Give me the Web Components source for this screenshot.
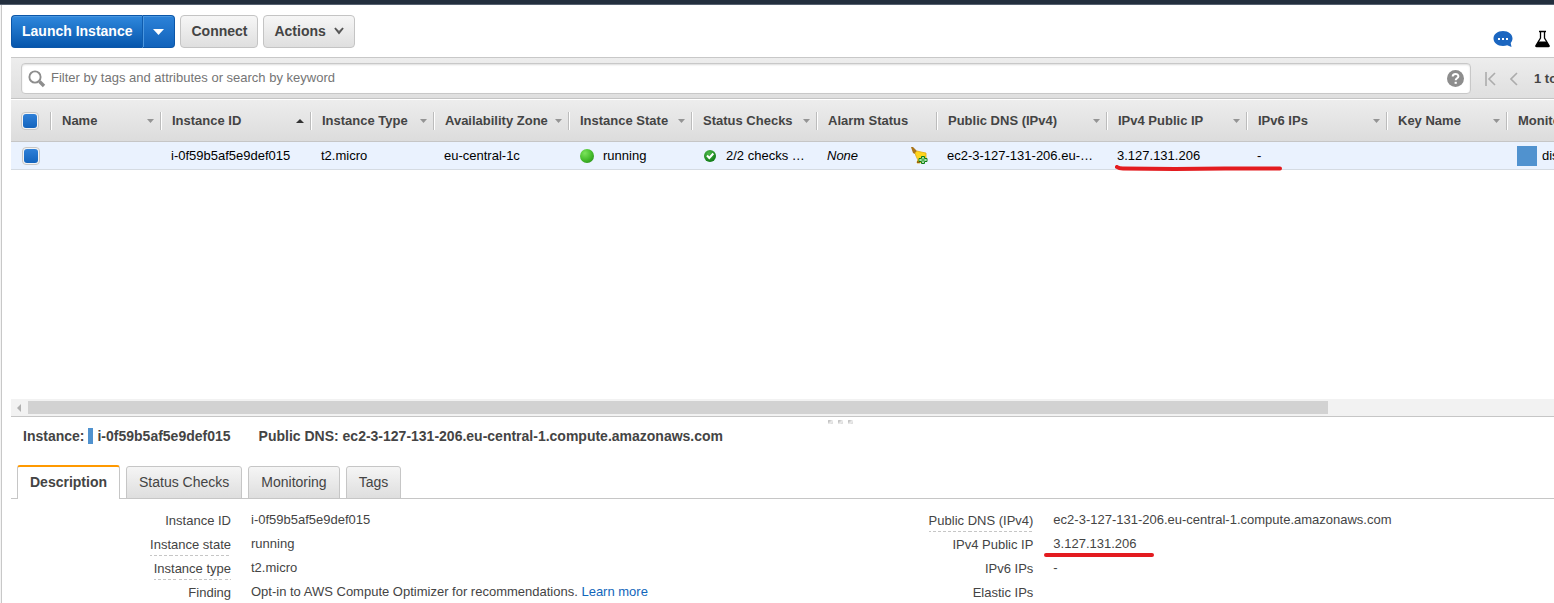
<!DOCTYPE html>
<html lang="en">
<head>
<meta charset="utf-8">
<title>EC2 Instances</title>
<style>
html, body { margin: 0; height: 100%; overflow: hidden; background: #f4f4f4; }
body { font: 13px/18px "Liberation Sans", Arial, sans-serif; color: #444; }
</style>
</head>
<body>
<ec2-console></ec2-console>
<script>
const define = (name, html, setup) => {
  const tpl = document.createElement('template');
  tpl.innerHTML = `<style>*{box-sizing:border-box}</style>` + html;
  customElements.define(name, class extends HTMLElement {
    constructor() {
      super();
      this.attachShadow({ mode: 'open' }).append(tpl.content.cloneNode(true));
    }
    connectedCallback() { if (setup) setup(this, this.shadowRoot); }
  });
};

define('ui-button', `
<style>
:host { display: block; }
button { display: flex; align-items: center; gap: 8px; height: 33px; margin: 0; padding: 0 10px 2px; border: 1px solid #c4c4c4; border-radius: 4px;
  background: linear-gradient(#f6f6f6, #dfdfdf); color: #444; font: bold 14px/20px "Liberation Sans", Arial, sans-serif; }
:host([kind=primary]) button { color: #fff; border-color: #0b56a8; background: linear-gradient(#2f88dd, #0656ac); box-shadow: inset 0 1px #4b97df; }
:host([side=left]) button { border-radius: 4px 0 0 4px; border-right: 0; }
:host([side=right]) button { border-radius: 0 4px 4px 0; border-left-color: #0f5cae; box-shadow: inset 1px 1px #4b97df; background: linear-gradient(#2c82d8, #1263bb); padding-bottom: 0; }
</style>
<button type="button"><slot></slot></button>`, (el, root) => {
  const name = el.getAttribute('label');
  if (name) root.querySelector('button').setAttribute('aria-label', name);
});

define('console-toolbar', `
<style>
:host { display: flex; align-items: flex-start; height: 52px; padding: 10px 4px 0 0; }
.group { display: flex; margin-right: 5px; }
svg { display: block; }
.tools { display: flex; gap: 22px; margin: 15px 0 0 auto; }
.tools button { padding: 0; border: 0; background: none; }
</style>
<div class="group">
  <ui-button kind="primary" side="left">Launch Instance</ui-button>
  <ui-button kind="primary" side="right" label="More launch options"><svg width="11" height="6"><path d="M0 0h11L5.500 6z" fill="#fff"/></svg></ui-button>
</div>
<div class="group"><ui-button>Connect</ui-button></div>
<div class="group"><ui-button>Actions <svg width="10" height="8" viewBox="0 0 10 8"><path d="M1 1l4 5 4-5" fill="none" stroke="#555" stroke-width="2"/><path d="M2 1l3 3 3-3" fill="none" stroke="#999"/></svg></ui-button></div>
<div class="tools">
  <button type="button" aria-label="Feedback"><svg width="20" height="18" viewBox="0 0 20 18"><path d="M10 1C4.500 1 .500 4.300.500 8.500S4.500 16 10 16c1.500 0 3-.3 4.200-.8L18.500 17l-.8-4c1-1.300 1.800-2.800 1.800-4.500C19.500 4.300 15.500 1 10 1z" fill="#1b66c0"/><path d="M5 8h2v2H5zM9 8h2v2H9zM13 8h2v2h-2z" fill="#fff"/></svg></button>
  <button type="button" aria-label="Experiments"><svg width="15" height="18" viewBox="0 0 15 18"><path d="M4 1.500h7M5.500 2v6L1 15.500q-.3 1 .5 1h12q.8 0 .5-1L9.500 8V2" fill="none" stroke="#000" stroke-width="1.300"/><path d="M3.500 11.500h8L14.500 16q0 1-1 1h-12q-1 0-1-1z"/></svg></button>
</div>`);

define('filter-bar', `
<style>
:host { display: flex; height: 42px; padding: 5px 0 0 10px; border-top: 1px solid #c8c8c8; border-bottom: 1px solid #c4c4c4;
  background: linear-gradient(#ededed, #dfdfdf); overflow: hidden; }
.box { flex: 1; min-width: 0; display: flex; align-items: center; height: 31px; padding: 0 6px; border: 1px solid #c8c8c8; border-radius: 4px; background: #fff; box-shadow: inset 0 1px 2px #ddd; }
input { flex: 1; min-width: 0; margin: 0; padding: 0 5px 2px; border: 0; outline: 0; background: none; color: #444; font: 13px/20px "Liberation Sans", Arial, sans-serif; }
input::placeholder { color: #757575; opacity: 1; }
svg { display: block; }
button { padding: 0; border: 0; background: none; }
.pager { flex: 0 0 83px; min-width: 0; height: 31px; display: flex; align-items: center; padding-left: 14px; white-space: nowrap; font-weight: bold; }
.pager button { flex: none; }
.prev { margin: 0 16px 0 14px; }
</style>
<div class="box">
  <svg width="18" height="18" viewBox="0 0 18 18"><circle cx="7" cy="7" r="5.600" fill="none" stroke="#8d8d8d" stroke-width="1.900"/><path d="M11.500 11.500l4.500 4.500" stroke="#8d8d8d" stroke-width="3.400"/></svg>
  <input type="text" aria-label="Filter instances" placeholder="Filter by tags and attributes or search by keyword">
  <button type="button" aria-label="Help"><svg width="17" height="17" viewBox="0 0 17 17"><circle cx="8.500" cy="8.500" r="8.500" fill="#8d8d8d"/><path d="M5.700 6.600c0-3.600 5.700-3.500 5.700-.3 0 2-2.700 2-2.700 4" fill="none" stroke="#fff" stroke-width="2"/><path d="M7.600 11.800h2.200v2H7.600z" fill="#fff"/></svg></button>
</div>
<div class="pager">
  <button type="button" aria-label="First page"><svg width="11" height="14" viewBox="0 0 11 14" fill="none" stroke="#acacac" stroke-width="1.600"><path d="M1 0v14M10 1L4 7l6 6"/></svg></button>
  <button class="prev" type="button" aria-label="Previous page"><svg width="8" height="14" viewBox="0 0 8 14" fill="none" stroke="#acacac" stroke-width="1.600"><path d="M7 1L1 7l6 6"/></svg></button>
  <span>1 to 1 of 1</span>
</div>`);

define('tick-box', `
<style>
:host { display: block; }
input { appearance: none; display: block; width: 18px; height: 18px; margin: 0; border: 1px solid #c6c6c6; border-radius: 4px; background: #f4f4f4; padding: 1px; }
input:checked::before { content: ""; display: block; width: 14px; height: 14px; border-radius: 3px; background: linear-gradient(#2f80d8, #1464bd); }
</style>
<input type="checkbox" checked>`, (el, root) => {
  root.querySelector('input').setAttribute('aria-label', el.getAttribute('label'));
});

define('red-underline', `
<style>:host { position: absolute; z-index: 1; display: block; pointer-events: none; } svg { display: block; }</style>
<svg height="6"><path fill="none" stroke="#e31b1f" stroke-linecap="round" stroke-linejoin="round"/></svg>`, (el, root) => {
  const w = Number(el.getAttribute('length'));
  root.querySelector('svg').setAttribute('width', w);
  const p = root.querySelector('path');
  p.setAttribute('stroke-width', el.getAttribute('weight') || 4);
  p.setAttribute('d', el.hasAttribute('hooked') ? `M2 2Q4 3.500 8 3.500L60 4 110 3.500H${w - 2}` : `M2 3H${w - 2}`);
});

define('instance-table', `
<style>
:host { display: block; position: relative; overflow: hidden; padding-top: 1px; }
table { width: 1655px; table-layout: fixed; border-collapse: separate; border-spacing: 0; }
th { height: 42px; padding: 0; text-align: left; border-bottom: 1px solid #c6c6c6; background: linear-gradient(#ededed, #dcdcdc); white-space: nowrap; }
.head { display: flex; align-items: center; height: 18px; padding: 0 6px 0 10px; border-left: 1px solid #bcbcbc; box-shadow: inset 1px 0 #fff; line-height: 18px; }
.head span { padding-left: 1px; }
.head svg { margin-left: auto; }
.check { padding-left: 10px; }
td { height: 28px; padding: 0 13px 0 11px; border-bottom: 1px solid #d5dbe2; background: #eaf2fe; color: #000; white-space: nowrap; overflow: hidden; text-overflow: ellipsis; }
td.check { padding: 0 0 0 11px; }
svg { display: block; flex: none; }
.cell { display: flex; align-items: center; }
.swatch { width: 20px; height: 20px; background: #5092cf; margin: 0 5px 0 0; }
td.status { padding: 0 0 0 12px; }
.status span { margin-left: 9px; }
.bell { margin-left: auto; padding: 0; border: 0; background: none; }
td.alarm { padding-right: 8px; }
td.dns { padding-right: 0; }
red-underline { left: 1104px; top: 66px; }
</style>
<table>
  <colgroup></colgroup>
  <thead><tr><th class="check"><tick-box label="Select all instances"></tick-box></th></tr></thead>
  <tbody><tr>
    <td class="check"><tick-box label="Select instance"></tick-box></td>
    <td></td>
    <td>i-0f59b5af5e9def015</td>
    <td>t2.micro</td>
    <td>eu-central-1c</td>
    <td class="status"><div class="cell"><svg width="14" height="14"><defs><radialGradient id="g" cx=".35" cy=".3" r=".8"><stop offset="0" stop-color="#7be35b"/><stop offset=".6" stop-color="#46bd2c"/><stop offset="1" stop-color="#2d941c"/></radialGradient></defs><circle cx="7" cy="7" r="7" fill="url(#g)"/></svg><span>running</span></div></td>
    <td class="status"><div class="cell"><svg width="14" height="12" viewBox="-1 0 14 12"><defs><radialGradient id="k" cx=".4" cy=".3" r=".8"><stop offset="0" stop-color="#4db84a"/><stop offset="1" stop-color="#08740f"/></radialGradient></defs><circle cx="6" cy="6" r="6" fill="url(#k)"/><path d="M3 5.500L5.300 8l4-4.500" fill="none" stroke="#fff" stroke-width="2"/></svg><span>2/2 checks …</span></div></td>
    <td class="alarm"><div class="cell"><em>None</em><button class="bell" type="button" aria-label="Create alarm"><svg width="18" height="17" viewBox="0 0 18 17"><path d="M1 0l2 0 4 4-2 3-2-1z" fill="#a9741b"/><path d="M5 6L7 4l4 1 5 1v5l-6 5H7q2-3-1-7z" fill="#ffd51c" stroke="#e2a90c" stroke-width=".8"/><path d="M7 14q3 0 3 2H7z" fill="#9a6310"/><path d="M11.500 9.500h3v2H17v3h-2.500v2h-3v-2H9v-3h2.500z" fill="#dff5d8" stroke="#0b7d12"/><path d="M13 10.500v5M10.500 13h5" stroke="#23a22a"/></svg></button></div></td>
    <td class="dns">ec2-3-127-131-206.eu-…</td>
    <td>3.127.131.206</td>
    <td>-</td>
    <td></td>
    <td><div class="cell"><i class="swatch"></i><span>disabled</span></div></td>
  </tr></tbody>
</table>
<red-underline length="167" hooked></red-underline>`, (el, root) => {
  const cols = [['Name', 110], ['Instance ID', 150, 'asc'], ['Instance Type', 123], ['Availability Zone', 135], ['Instance State', 123],
    ['Status Checks', 125], ['Alarm Status', 120, 'none'], ['Public DNS (IPv4)', 170], ['IPv4 Public IP', 140], ['IPv6 IPs', 140], ['Key Name', 120], ['Monitoring', 160]];
  const group = root.querySelector('colgroup');
  const row = root.querySelector('thead tr');
  const addCol = w => { const c = document.createElement('col'); c.style.width = w + 'px'; group.append(c); };
  addCol(39);
  for (const [name, w, sort] of cols) {
    addCol(w);
    const th = document.createElement('th');
    const arrow = sort === 'none' ? '' : sort === 'asc'
      ? '<svg width="8" height="4"><path d="M0 4h8L4 0z" fill="#333"/></svg>'
      : '<svg width="7" height="4"><path d="M0 0h7L3.500 4z" fill="#949494"/></svg>';
    th.innerHTML = `<div class="head"><span>${name}</span>${arrow}</div>`;
    row.append(th);
  }
});

define('h-scrollbar', `
<style>
:host { display: flex; align-items: center; height: 17px; background: #f2f2f2; }
button { flex: 0 0 17px; height: 17px; padding: 0 0 0 6px; border: 0; background: none; }
svg { display: block; }
.track { flex: 1; }
.thumb { width: 1300px; max-width: 90%; height: 13px; background: #d2d2d2; }
</style>
<button type="button" aria-label="Scroll left"><svg width="4" height="8"><path d="M4 0v8L0 4z" fill="#b0b0b0"/></svg></button>
<div class="track"><div class="thumb"></div></div>`);

define('tab-item', `
<style>
:host { display: block; }
button { display: block; height: 33px; margin: 0; padding: 0 12px 2px; border: 1px solid #c6c6c6; border-radius: 3px 3px 0 0; background: linear-gradient(#f5f5f5, #dedede);
  color: #444; font: 14px/20px "Liberation Sans", Arial, sans-serif; }
:host([selected]) button { height: 34px; border-top: 2px solid #f90; border-bottom: 0; background: #fff; font-weight: bold; }
</style>
<button type="button" role="tab"><slot></slot></button>`, (el, root) => {
  root.querySelector('button').setAttribute('aria-selected', el.hasAttribute('selected'));
});

define('detail-field', `
<style>
:host { display: grid; grid-template-columns: 220px 1fr; column-gap: 20px; height: 24px; white-space: nowrap; }
.label { justify-self: end; height: 21px; line-height: 20px; border-bottom: 1px solid transparent; }
:host([hint]) .label { border-image: repeating-linear-gradient(90deg, #c6c6c6 0 3px, transparent 3px 5px) 1; }
.value { position: relative; line-height: 18px; }
</style>
<div class="label"><slot name="label"></slot></div>
<div class="value"><slot></slot></div>`);

define('detail-panel', `
<style>
:host { display: block; overflow: hidden; }
.grip { display: flex; justify-content: center; gap: 5px; height: 9px; padding: 3px 0 0; margin-right: 126px; margin-left: 242px; }
.grip i { width: 5px; height: 4px; border-radius: 1px; background: linear-gradient(135deg, #aaa, #eee 60%, #ccc); }
h2 { display: flex; align-items: center; margin: 0; padding-left: 12px; height: 20px; font: bold 14px/20px "Liberation Sans", Arial, sans-serif; white-space: nowrap; }
.mark { width: 5px; height: 16px; margin: 0 4px; background: #5092cf; }
.dns { margin-left: 28px; }
.tabs { display: flex; align-items: flex-end; gap: 6px; height: 34px; margin-top: 19px; padding-left: 6px; box-shadow: inset 0 -1px #c6c6c6; }
.fields { display: grid; grid-template-columns: 52% 1fr; padding-top: 12px; }
a { color: #1166bb; text-decoration: none; }
red-underline { left: -9px; top: 17px; }
</style>
<div class="grip"><i></i><i></i><i></i></div>
<h2><span>Instance:</span><i class="mark"></i><span>i-0f59b5af5e9def015</span><span class="dns">Public DNS: ec2-3-127-131-206.eu-central-1.compute.amazonaws.com</span></h2>
<div class="tabs" role="tablist">
  <tab-item selected>Description</tab-item><tab-item>Status Checks</tab-item><tab-item>Monitoring</tab-item><tab-item>Tags</tab-item>
</div>
<div class="fields">
  <div>
    <detail-field><span slot="label">Instance ID</span>i-0f59b5af5e9def015</detail-field>
    <detail-field hint><span slot="label">Instance state</span>running</detail-field>
    <detail-field hint><span slot="label">Instance type</span>t2.micro</detail-field>
    <detail-field><span slot="label">Finding</span>Opt-in to AWS Compute Optimizer for recommendations. <a href="#">Learn more</a></detail-field>
  </div>
  <div>
    <detail-field hint><span slot="label">Public DNS (IPv4)</span>ec2-3-127-131-206.eu-central-1.compute.amazonaws.com</detail-field>
    <detail-field><span slot="label">IPv4 Public IP</span>3.127.131.206<red-underline length="110"></red-underline></detail-field>
    <detail-field><span slot="label">IPv6 IPs</span>-</detail-field>
    <detail-field><span slot="label">Elastic IPs</span></detail-field>
  </div>
</div>`);

define('ec2-console', `
<style>
:host { display: flex; flex-direction: column; height: 100vh; }
.nav { flex: none; height: 5px; background: #232f3e; border-bottom: 1px solid #566170; }
main { flex: 1; min-height: 0; display: flex; flex-direction: column; margin-left: 1px; border-left: 1px solid #c8c8c8; padding-left: 9px; background: #fff; }
console-toolbar, filter-bar, h-scrollbar { flex: none; }
instance-table { flex: 1; min-height: 0; }
detail-panel { flex: 0 0 187px; border-top: 1px solid #c6c6c6; }
</style>
<header class="nav"></header>
<main>
  <console-toolbar></console-toolbar>
  <filter-bar></filter-bar>
  <instance-table></instance-table>
  <h-scrollbar></h-scrollbar>
  <detail-panel></detail-panel>
</main>`);
</script>
</body>
</html>
